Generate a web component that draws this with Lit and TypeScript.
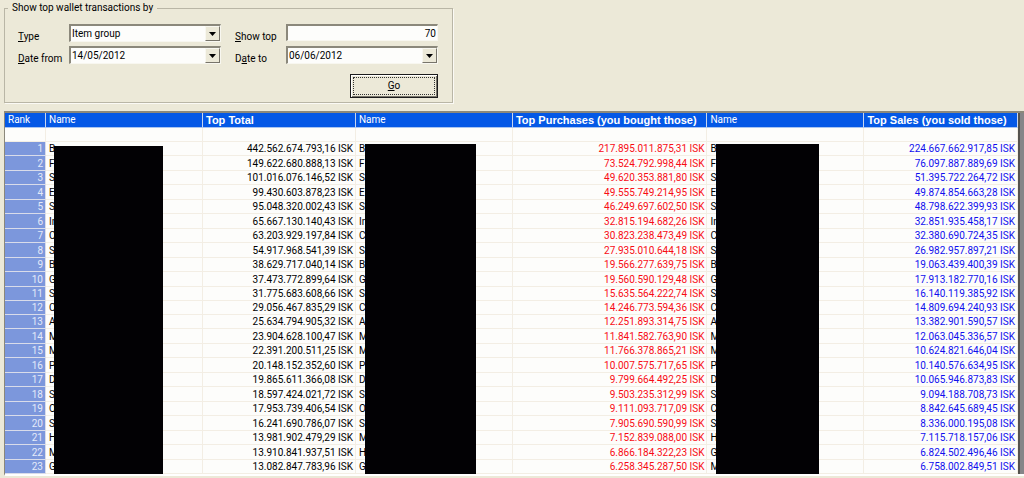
import { LitElement, html, css } from "lit";
import { customElement, property } from "lit/decorators.js";

type Row = [string, string, string, string, string, string];

const ROWS: Row[] = [
  ["B", "442.562.674.793,16", "B", "217.895.011.875,31", "B", "224.667.662.917,85"],
  ["F", "149.622.680.888,13", "F", "73.524.792.998,44", "F", "76.097.887.889,69"],
  ["S", "101.016.076.146,52", "S", "49.620.353.881,80", "S", "51.395.722.264,72"],
  ["E", "99.430.603.878,23", "E", "49.555.749.214,95", "E", "49.874.854.663,28"],
  ["S", "95.048.320.002,43", "S", "46.249.697.602,50", "S", "48.798.622.399,93"],
  ["In", "65.667.130.140,43", "In", "32.815.194.682,26", "In", "32.851.935.458,17"],
  ["C", "63.203.929.197,84", "C", "30.823.238.473,49", "C", "32.380.690.724,35"],
  ["S", "54.917.968.541,39", "S", "27.935.010.644,18", "S", "26.982.957.897,21"],
  ["B", "38.629.717.040,14", "B", "19.566.277.639,75", "B", "19.063.439.400,39"],
  ["G", "37.473.772.899,64", "G", "19.560.590.129,48", "G", "17.913.182.770,16"],
  ["S", "31.775.683.608,66", "S", "15.635.564.222,74", "S", "16.140.119.385,92"],
  ["C", "29.056.467.835,29", "C", "14.246.773.594,36", "C", "14.809.694.240,93"],
  ["A", "25.634.794.905,32", "A", "12.251.893.314,75", "A", "13.382.901.590,57"],
  ["M", "23.904.628.100,47", "M", "11.841.582.763,90", "M", "12.063.045.336,57"],
  ["M", "22.391.200.511,25", "M", "11.766.378.865,21", "M", "10.624.821.646,04"],
  ["P", "20.148.152.352,60", "P", "10.007.575.717,65", "P", "10.140.576.634,95"],
  ["D", "19.865.611.366,08", "D", "9.799.664.492,25", "D", "10.065.946.873,83"],
  ["S", "18.597.424.021,72", "S", "9.503.235.312,99", "S", "9.094.188.708,73"],
  ["O", "17.953.739.406,54", "O", "9.111.093.717,09", "C", "8.842.645.689,45"],
  ["S", "16.241.690.786,07", "S", "7.905.690.590,99", "S", "8.336.000.195,08"],
  ["H", "13.981.902.479,29", "M", "7.152.839.088,00", "H", "7.115.718.157,06"],
  ["M", "13.910.841.937,51", "H", "6.866.184.322,23", "G", "6.824.502.496,46"],
  ["G", "13.082.847.783,96", "G", "6.258.345.287,50", "M", "6.758.002.849,51"],
];

@customElement("drop-arrow")
export class DropArrow extends LitElement {
  static styles = css`
    :host {
      display: flex;
      align-items: center;
      justify-content: center;
      box-sizing: border-box;
      background: #ece9d8;
      border: 1px solid #f8f7f0;
      border-right-color: #77746a;
      border-bottom-color: #77746a;
      pointer-events: none;
    }
    svg {
      display: block;
    }
  `;
  render() {
    return html`<svg width="7" height="4" viewBox="0 0 7 4" aria-hidden="true">
      <path d="M0 0H7L3.5 4Z" fill="#000" />
    </svg>`;
  }
}

@customElement("filter-form")
export class FilterForm extends LitElement {
  static styles = css`
    :host {
      display: block;
    }
    .group {
      width: fit-content;
      box-sizing: border-box;
      margin: 0;
      padding: 9px 14px 4px 13px;
      border: 1px solid #b9b6a6;
      box-shadow: 1px 1px 0 #fbfaf5;
    }
    .title {
      margin-left: -10px;
      padding: 0 4px;
      line-height: 14px;
    }
    .pairs {
      display: flex;
      gap: 14px;
    }
    .fields {
      display: grid;
      grid-template-columns: 51px 152px;
      grid-auto-rows: 18px;
      row-gap: 4px;
    }
    .label {
      padding-top: 4px;
      line-height: 18px;
      white-space: nowrap;
    }
    .combo {
      display: grid;
      grid-template-columns: 1fr 15px;
      background: #fdfdfb;
    }
    .combo,
    .number {
      box-sizing: border-box;
      border: 2px solid #8b887b;
      border-right: 1px solid #f8f7f0;
      border-bottom: 1px solid #f8f7f0;
    }
    .combo select {
      grid-column: 1 / 3;
      grid-row: 1;
      appearance: none;
      min-width: 0;
      margin: 0;
      padding: 0 16px 0 1px;
      border: 0;
      outline: 0;
      border-radius: 0;
      background: transparent;
      color: #000;
      font: inherit;
      line-height: 15px;
    }
    .combo drop-arrow {
      grid-column: 2;
      grid-row: 1;
    }
    .number {
      height: 17px;
      min-width: 0;
      margin: 0;
      padding: 0 1px;
      border-radius: 0;
      outline: 0;
      background: #fdfdfb;
      color: #000;
      font: inherit;
      text-align: right;
    }
    .actions {
      display: flex;
      justify-content: flex-end;
      margin-top: 10px;
    }
    .go {
      width: 88px;
      height: 24px;
      padding: 2px;
      border: 1px solid #1c1c1c;
      border-radius: 0;
      background: #ece9d8;
      box-shadow: inset 1px 1px 0 #fff, inset -1px -1px 0 #77746a;
      color: #000;
      font: inherit;
    }
    .focus {
      display: block;
      border: 1px dotted #333;
      line-height: 16px;
    }
  `;

  private combo(id: string, value: string) {
    return html`<div class="combo">
      <select id=${id}>
        <option>${value}</option>
      </select>
      <drop-arrow></drop-arrow>
    </div>`;
  }

  render() {
    return html`
      <fieldset class="group">
        <legend class="title">Show top wallet transactions by</legend>
        <div class="pairs">
          <div class="fields">
            <label class="label" for="type"><u>T</u>ype</label>
            ${this.combo("type", "Item group")}
            <label class="label" for="from"><u>D</u>ate from</label>
            ${this.combo("from", "14/05/2012")}
          </div>
          <div class="fields">
            <label class="label" for="top"><u>S</u>how top</label>
            <input class="number" id="top" type="text" inputmode="numeric" value="70" />
            <label class="label" for="to">D<u>a</u>te to</label>
            ${this.combo("to", "06/06/2012")}
          </div>
        </div>
        <div class="actions">
          <button class="go" type="button"><span class="focus"><u>G</u>o</span></button>
        </div>
      </fieldset>
    `;
  }
}

@customElement("wallet-table")
export class WalletTable extends LitElement {
  @property({ attribute: false }) rows: Row[] = [];

  static styles = css`
    :host {
      display: flex;
      border-top: 2px solid #8b887b;
      border-left: 1px solid #8b887b;
      border-bottom: 2px solid #fff;
      background: #fdfdfb;
    }
    .table {
      flex: 1;
      width: 100%;
      table-layout: fixed;
      border-collapse: separate;
      border-spacing: 0;
    }
    .rank {
      width: 41px;
    }
    .w-name {
      width: 15.5%;
    }
    .w-total {
      width: 15.1%;
    }
    .w-buy {
      width: 19.2%;
    }
    th,
    td {
      box-sizing: border-box;
      height: 14px;
      padding: 0 2px 0 3px;
      border-right: 1px solid #f3eee4;
      border-bottom: 1px solid #f3eee4;
      line-height: 13px;
      white-space: nowrap;
      text-align: left;
    }
    th {
      position: relative;
      height: 15px;
      line-height: 14px;
      background: #0458e6;
      border-right-color: #c8d6ee;
      border-bottom-color: #a9c4f0;
      color: #fff;
      font-weight: 400;
    }
    .strong {
      font-family: "Liberation Sans", sans-serif;
      font-size: 11px;
      font-weight: 700;
    }
    .tall td {
      height: 15px;
    }
    .index {
      background: #7c97dc;
      border-color: #d9dcea;
      color: #e4eafa;
      text-align: right;
    }
    .amount {
      text-align: right;
    }
    .buy {
      color: #f80c14;
    }
    .sell {
      color: #1010ee;
    }
    .cover {
      position: absolute;
      left: 9px;
      top: 31px;
      width: 71%;
      height: 330px;
      background: #020104;
    }
    .cover.first {
      left: 8px;
      top: 33px;
      width: 70%;
      height: 328px;
    }
    .cover.last {
      width: 66%;
    }
    .scroll {
      flex: none;
      width: 4px;
      border-left: 2px solid #55534e;
      background: #858588;
    }
  `;

  render() {
    return html`
      <table class="table">
        <colgroup>
          <col class="rank" />
          <col class="w-name" />
          <col class="w-total" />
          <col class="w-name" />
          <col class="w-buy" />
          <col class="w-name" />
          <col />
        </colgroup>
        <thead>
          <tr>
            <th>Rank</th>
            <th>Name<span class="cover first"></span></th>
            <th class="strong">Top Total</th>
            <th>Name<span class="cover"></span></th>
            <th class="strong">Top Purchases (you bought those)</th>
            <th>Name<span class="cover last"></span></th>
            <th class="strong">Top Sales (you sold those)</th>
          </tr>
        </thead>
        <tbody>
          <tr>
            <td></td><td></td><td></td><td></td><td></td><td></td><td></td>
          </tr>
          ${this.rows.map(
            (r, i) => html`<tr class=${i % 2 === 1 && i !== 11 ? "tall" : ""}>
              <td class="index">${i + 1}</td>
              <td>${r[0]}</td>
              <td class="amount">${r[1]} ISK</td>
              <td>${r[2]}</td>
              <td class="amount buy">${r[3]} ISK</td>
              <td>${r[4]}</td>
              <td class="amount sell">${r[5]} ISK</td>
            </tr>`
          )}
        </tbody>
      </table>
      <div class="scroll"></div>
    `;
  }
}

@customElement("app-root")
export class AppRoot extends LitElement {
  static styles = css`
    :host {
      display: flex;
      flex-direction: column;
      gap: 8px;
      box-sizing: border-box;
      min-height: 100vh;
      padding: 1px 0 2px 4px;
      background: #ece9d8;
      color: #000;
      font-family: Roboto, "Liberation Sans", sans-serif;
      font-size: 10px;
    }
  `;
  render() {
    return html`
      <filter-form></filter-form>
      <wallet-table .rows=${ROWS}></wallet-table>
    `;
  }
}
